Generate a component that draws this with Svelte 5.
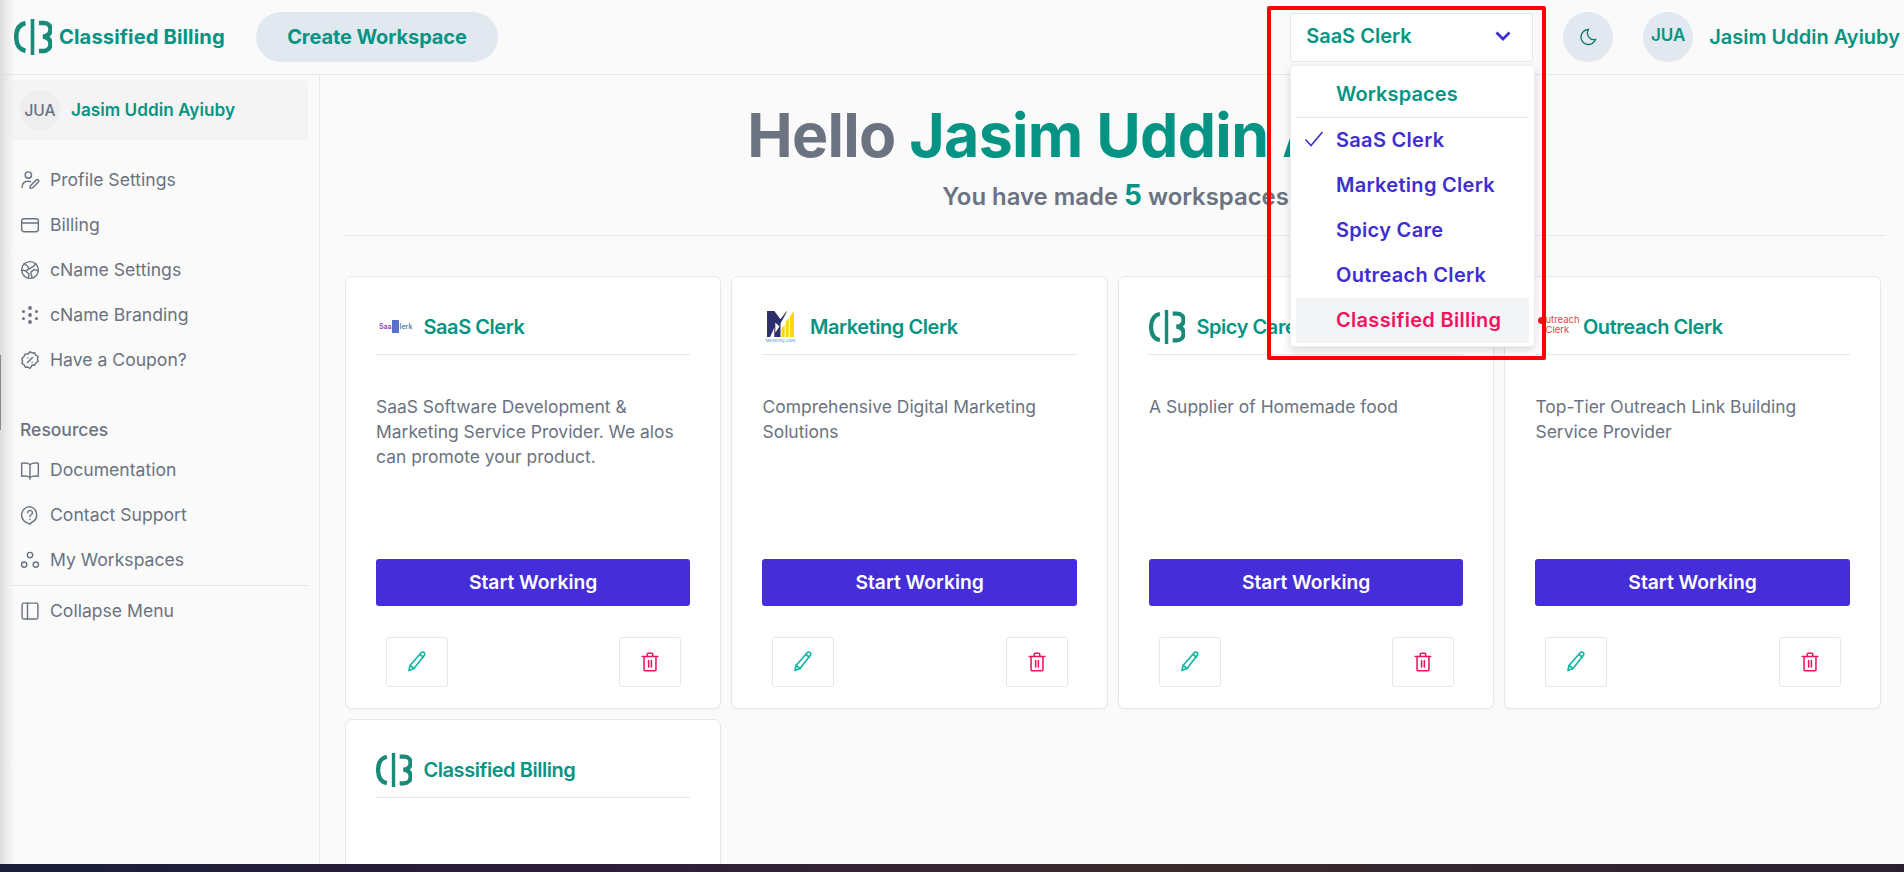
<script>
  const menu = [
    { icon: 'profile', label: 'Profile Settings' },
    { icon: 'card', label: 'Billing' },
    { icon: 'globe', label: 'cName Settings' },
    { icon: 'dots', label: 'cName Branding' },
    { icon: 'coupon', label: 'Have a Coupon?' }
  ];
  const resources = [
    { icon: 'book', label: 'Documentation' },
    { icon: 'help', label: 'Contact Support' },
    { icon: 'circles', label: 'My Workspaces' }
  ];
  const workspaces = [
    { name: 'SaaS Clerk', logo: 'saas', text: 'SaaS Software Development & Marketing Service Provider. We alos can promote your product.' },
    { name: 'Marketing Clerk', logo: 'marketing', text: 'Comprehensive Digital Marketing Solutions' },
    { name: 'Spicy Care', logo: 'cb', text: 'A Supplier of Homemade food' },
    { name: 'Outreach Clerk', logo: 'outreach', text: 'Top-Tier Outreach Link Building Service Provider' },
    { name: 'Classified Billing', logo: 'cb', text: '' }
  ];
  const options = ['SaaS Clerk', 'Marketing Clerk', 'Spicy Care', 'Outreach Clerk', 'Classified Billing'];

  const icons = {
    profile: '<circle cx="10" cy="6" r="3.800"/><path d="M2.500 21c0-4.800 3-7.500 7.500-7.500 1 0 2 .2 2.800 .5"/><path d="M15 21.500l-3 .5.500-3 7-7a1.700 1.700 0 0 1 2.500 2.500z"/>',
    card: '<rect x="2" y="4.500" width="20" height="15.500" rx="2.500"/><path d="M2 9.500h20"/>',
    globe: '<circle cx="12" cy="12" r="10"/><path d="M5 4.500l4.500 3 1 3.500-3.500 2-5-1M19 4.500l-3.500 3.500-5 3M22 13l-5-1.500-4 3 1.500 7M10 21.500l1-4.500-4-3.500"/>',
    book: '<path d="M12 5.500C10 3.800 6 3.200 2 3.800v15.700c4-.6 8 0 10 1.500 2-1.500 6-2.100 10-1.500V3.800C18 3.200 14 3.800 12 5.500zM12 5.500V23"/>',
    help: '<path d="M12 2a10 10 0 0 0-4 19.200L12 23l1.800-2A10 10 0 0 0 12 2z"/><path d="M9.300 9.300a2.800 2.800 0 1 1 4.200 2.400c-1 .6-1.500 1.200-1.500 2.300"/><path d="M12 17v.4"/>',
    circles: '<circle cx="12" cy="6" r="3.200"/><circle cx="5" cy="17.500" r="3.200"/><circle cx="19" cy="17.500" r="3.200"/>',
    coupon: '<path d="M12 2l2.600 1.600 3-.3 1.400 2.800 2.700 1.700-.7 3 .7 3-2.700 1.700-1.400 2.800-3-.3L12 22l-2.600-1.600-3 .3L5 17.900l-2.700-1.700.7-3-.7-3L5 7.500l1.400-2.800 3 .3z"/><path d="M15 9l-6 6M9.500 9.500v.1M14.500 14.500v.1"/>',
    panel: '<rect x="2.500" y="2.500" width="19" height="19" rx="2"/><path d="M9 2.500v19"/>',
    pencil: '<path d="M4 20.500l1-5L16 3a2 2 0 0 1 3.500 2L9 18.500z"/><path d="M5 15.500l4 3M15 4.500l3.500 2.800"/>',
    trash: '<path d="M3.500 6h17M9 6V3.500a1 1 0 0 1 1-1h4a1 1 0 0 1 1 1V6M5.500 6v14.500a1 1 0 0 0 1 1h11a1 1 0 0 0 1-1V6M10.500 10.500v7M13.500 10.500v7"/>'
  };
</script>

<div class="shell">
  <header class="topbar">
    <div class="brand">
      {@render cbLogo(38)}
      <span>Classified Billing</span>
    </div>
    <button class="create">Create Workspace</button>
    <div class="spacer"></div>
    <div class="select">
      <span>SaaS Clerk</span>
      <svg width="20" height="20" viewBox="0 0 20 20" fill="none" stroke="#3f2ed0" stroke-width="2.800"><path d="M3.500 6.500l6.500 6.500 6.500-6.500"/></svg>
    </div>
    <button class="theme">
      <svg width="20" height="20" viewBox="0 0 24 24" fill="none" stroke="#0f766e" stroke-width="1.600" stroke-linecap="round"><path d="M12.500 3a9 9 0 1 0 8.500 12 8 8 0 0 1-8.500-12z"/></svg>
    </button>
    <div class="avatar top">JUA</div>
    <span class="topname">Jasim Uddin Ayiuby</span>
  </header>

  <div class="body">
    <aside class="sidebar">
      <div class="usercard">
        <div class="avatar">JUA</div>
        <span>Jasim Uddin Ayiuby</span>
      </div>
      <nav class="nav">
        {#each menu as item}
          {@render navRow(item)}
        {/each}
      </nav>
      <div class="section">Resources</div>
      {#each resources as item}
        {@render navRow(item)}
      {/each}
      <div class="divider"></div>
      {@render navRow({ icon: 'panel', label: 'Collapse Menu' })}
    </aside>

    <main class="main">
      <div class="hero">
        <h1>Hello <em>Jasim Uddin Ayiuby</em></h1>
        <p>You have made <b>5</b> workspaces</p>
      </div>
      <div class="grid">
        {#each workspaces as ws}
          <article class="card">
            <div class="cardhead">
              <div class="logo">
                {#if ws.logo === 'cb'}
                  {@render cbLogo(36)}
                {:else if ws.logo === 'saas'}
                  <div class="saas"><span>Saa</span><i></i><span class="blue">lerk</span></div>
                {:else if ws.logo === 'marketing'}
                  <div class="mk">
                    <svg width="29" height="29" viewBox="0 0 28 28">
                      <path d="M1 1h7l6 8 6-8v1l-6 11v13H8v-9l-4 9H1z" fill="#2b2f6b"/>
                      <path d="M9 12l4 4-4 6z" fill="#fff"/>
                      <path d="M15 26v-8l3-4v12zM19 26V11l3-3v18zM23 26V6l4-5v25z" fill="#fbd800"/>
                    </svg>
                    <span>Marketing Clerk</span>
                  </div>
                {:else}
                  <div class="out"><i></i><span>utreach<br />Clerk</span></div>
                {/if}
              </div>
              <h2>{ws.name}</h2>
            </div>
            <p class="desc">{ws.text}</p>
            <button class="start">Start Working</button>
            <div class="actions">
              <button class="tool pencil">{@render icon('pencil', 24)}</button>
              <button class="tool trash">{@render icon('trash', 22)}</button>
            </div>
          </article>
        {/each}
      </div>
    </main>
  </div>

  <!-- open workspace dropdown -->
  <div class="dropdown">
    <div class="ddhead">Workspaces</div>
    {#each options as opt, i}
      <div class="dditem" class:hover={i === 4}>
        {#if i === 0}
          <svg class="check" width="20" height="20" viewBox="0 0 20 20" fill="none" stroke="#3f2ed0" stroke-width="1.600"><path d="M1.500 10.500l5.500 6L18.500 3"/></svg>
        {/if}
        {opt}
      </div>
    {/each}
  </div>

  <!-- annotation and screenshot edges -->
  <div class="redbox"></div>
  <div class="edge"></div>
  <div class="edgemark"></div>
  <div class="taskbar"></div>
</div>

{#snippet icon(name, size)}
  <svg width={size} height={size} viewBox="0 0 24 24" fill="none" stroke="currentColor" stroke-width="1.700" stroke-linecap="round" stroke-linejoin="round">{@html icons[name]}</svg>
{/snippet}

{#snippet navRow(item)}
  <div class="row">
    {#if item.icon === 'dots'}
      <svg width="20" height="20" viewBox="0 0 20 20" fill="currentColor">
        <circle cx="10" cy="3" r="1.900"/><circle cx="10" cy="17" r="1.900"/><circle cx="10" cy="10" r="1.900"/>
        <circle cx="3.500" cy="6.500" r="1.500"/><circle cx="16.500" cy="6.500" r="1.500"/><circle cx="3.500" cy="13.500" r="1.500"/><circle cx="16.500" cy="13.500" r="1.500"/>
      </svg>
    {:else}
      {@render icon(item.icon, 20)}
    {/if}
    <span>{item.label}</span>
  </div>
{/snippet}

{#snippet cbLogo(size)}
  <svg class="cb" width={size} height={size} viewBox="0 0 38 38" fill="none" stroke="#1a8a78" stroke-width="4.500">
    <path d="M11.500 5C5 6.500 2.200 12 2.200 19s2.800 12.500 9.300 14"/>
    <path d="M18.500 1v36" stroke-width="3.600"/>
    <path d="M25 5h5c4.500 0 6.500 3 6.500 6.500S34 18 29 18.700c5.500 .5 7.500 3.500 7.500 7.300s-3 7-7.500 7h-4"/>
  </svg>
{/snippet}

<style>
  :global(body) { margin: 0; background: #fafafa; }

  .shell {
    width: 1904px; height: 872px; overflow: hidden; position: relative;
    font-family: Inter, "Liberation Sans", sans-serif;
    background: #fafafa; color: #6b7280;
  }
  button { font-family: inherit; border: none; cursor: pointer; }

  .topbar {
    height: 74px; border-bottom: 1px solid #e5e7eb;
    display: flex; align-items: center; padding: 0 4px 0 14px;
  }
  .brand { display: flex; align-items: center; gap: 7px; width: 242px; color: #059483; font-size: 20.200px; font-weight: 700; letter-spacing: 0.1px; white-space: nowrap; }
  .brand span { padding-bottom: 2px; }
  .cb { flex: none; }
  .create {
    width: 242px; height: 50px; border-radius: 25px; background: #e2e8f0; padding-bottom: 2px;
    color: #059483; font-size: 20px; font-weight: 700; letter-spacing: -0.1px;
  }
  .spacer { flex: 1; }
  .select {
    width: 243px; height: 49px; box-sizing: border-box; background: #fff; border: 1px solid #e5e7eb; border-radius: 3px;
    display: flex; align-items: center; justify-content: space-between; padding: 0 19px 2px 15px;
    color: #059483; font-size: 20px; font-weight: 600;
  }
  .theme {
    width: 50px; height: 50px; border-radius: 50%; background: #e2e8f0; margin-left: 30px;
    display: flex; align-items: center; justify-content: center; padding: 0;
  }
  .avatar {
    width: 40px; height: 40px; border-radius: 50%; background: #eeeeee; flex: none;
    display: flex; align-items: center; justify-content: center;
    font-size: 15.500px; font-weight: 500; color: #6b7280;
  }
  .avatar.top { width: 50px; height: 50px; background: #e2e8f0; color: #059483; font-size: 17px; font-weight: 600; margin-left: 30px; padding-bottom: 4px; box-sizing: border-box; }
  .topname { margin-left: 16px; color: #059483; font-size: 20px; font-weight: 600; white-space: nowrap; }

  .body { display: flex; height: 797px; }
  .sidebar { width: 320px; flex: none; box-sizing: border-box; border-right: 1px solid #e5e7eb; padding: 5px 11px 0 10px; }
  .usercard {
    height: 60px; background: #f4f4f5; border-radius: 3px; padding: 0 10px;
    display: flex; align-items: center; gap: 11px;
    color: #059483; font-size: 17.200px; font-weight: 600;
  }
  .usercard > span { padding-bottom: 2px; }
  .nav { margin-top: 17px; }
  .row { height: 45px; display: flex; align-items: center; gap: 10px; padding-left: 10px; font-size: 17.600px; color: #6b7280; }
  .row svg { flex: none; }
  .section { margin-top: 31px; height: 34px; line-height: 34px; padding-left: 10px; font-size: 17.500px; font-weight: 500; }
  .divider { height: 1px; background: #e5e7eb; margin: 3px 0 2px; }

  .main { flex: 1; padding: 0 18px 0 25px; min-width: 0; }
  .hero { height: 161px; box-sizing: border-box; border-bottom: 1px solid #e5e7eb; text-align: center; padding-top: 24px; }
  h1 { margin: 0; font-size: 60.800px; line-height: 72px; font-weight: 700; color: #6b7280; letter-spacing: -0.7px; }
  h1 em { font-style: normal; color: #059483; }
  .hero p { margin: 7px 0 0; font-size: 23.900px; line-height: 34px; font-weight: 600; color: #6b7280; }
  .hero b { font-size: 28px; color: #059483; font-weight: 700; }

  .grid { display: grid; grid-template-columns: repeat(4, 376.300px); column-gap: 10.200px; row-gap: 10px; margin-top: 40px; }
  .card {
    height: 433px; box-sizing: border-box; background: #fff; border: 1px solid #e5e7eb; border-radius: 7px;
    padding: 0 30px; box-shadow: 0 1px 2px rgba(0,0,0,0.04);
  }
  .cardhead { height: 78px; box-sizing: border-box; border-bottom: 1px solid #e5e7eb; display: flex; align-items: center; gap: 15.500px; padding-top: 22px; }
  .logo { width: 32px; height: 36px; display: flex; align-items: center; flex: none; }
  h2 { margin: 0; color: #059483; font-size: 20px; font-weight: 600; letter-spacing: -0.45px; white-space: nowrap; }
  .desc { margin: 39px 0 0; height: 165px; font-size: 17.450px; line-height: 25px; color: #6b7280; }
  .start {
    display: block; width: 100%; height: 47px; background: #452ed8; color: #fff;
    border-radius: 3px; font-size: 19.300px; font-weight: 600; padding-bottom: 2px;
  }
  .actions { display: flex; justify-content: space-between; padding: 0 9px 0 10px; margin-top: 31px; }
  .tool {
    width: 62px; height: 50px; background: #fff; border: 1px solid #e5e7eb; border-radius: 3px;
    display: flex; align-items: center; justify-content: center; padding: 0;
  }
  .pencil { color: #14b8a6; }
  .trash { color: #f31260; }

  .saas { display: flex; align-items: center; font-size: 7px; color: #8e44ad; white-space: nowrap; font-weight: 600; padding-left: 3px; }
  .saas i { width: 7px; height: 13px; background: #5a6ecb; margin: 0 0.5px; }
  .saas .blue { color: #4a7fb0; }
  .mk { display: flex; flex-direction: column; align-items: center; padding-left: 3px; }
  .mk span { font-size: 4px; color: #4a9bd6; white-space: nowrap; margin-top: -1px; }
  .out { display: flex; align-items: flex-start; color: #e4473f; font-size: 9.500px; line-height: 10px; margin-top: -4px; padding-left: 3px; }
  .out i { width: 7px; height: 7px; border-radius: 50%; background: #d9241c; margin-top: 2px; flex: none; }
  .out span { white-space: nowrap; }

  .dropdown {
    position: absolute; left: 1290px; top: 65px; width: 245px; height: 282px; box-sizing: border-box;
    background: #fff; border: 1px solid #eceef1; border-radius: 4px; padding: 6px 5px;
    box-shadow: 0 4px 10px rgba(0,0,0,0.14);
  }
  .ddhead {
    height: 45px; line-height: 44px; padding-left: 40px; border-bottom: 1px solid #e5e7eb;
    color: #059483; font-size: 20px; font-weight: 600; letter-spacing: 0.1px;
  }
  .dditem {
    height: 45px; line-height: 45px; padding-left: 40px; position: relative;
    color: #3f2ed0; font-size: 20px; font-weight: 600; letter-spacing: 0.3px;
  }
  .dditem.hover { background: #f3f4f6; color: #f31260; }
  .check { position: absolute; left: 8px; top: 11px; }

  .redbox { position: absolute; left: 1267px; top: 6px; width: 279px; height: 354px; box-sizing: border-box; border: 4px solid #fe0000; border-radius: 2px; }
  .edge { position: absolute; left: 0; top: 0; bottom: 0; width: 14px; background: linear-gradient(to right, #dcdcdc, rgba(250,250,250,0)); }
  .edgemark { position: absolute; left: 0; top: 355px; width: 1px; height: 75px; background: #8a8a8a; }
  .taskbar { position: absolute; left: 0; right: 0; top: 864px; height: 8px; background: linear-gradient(to right, #1a1f38, #2c1c3a 30%, #3a2a2c 60%, #2a2030); }
</style>
